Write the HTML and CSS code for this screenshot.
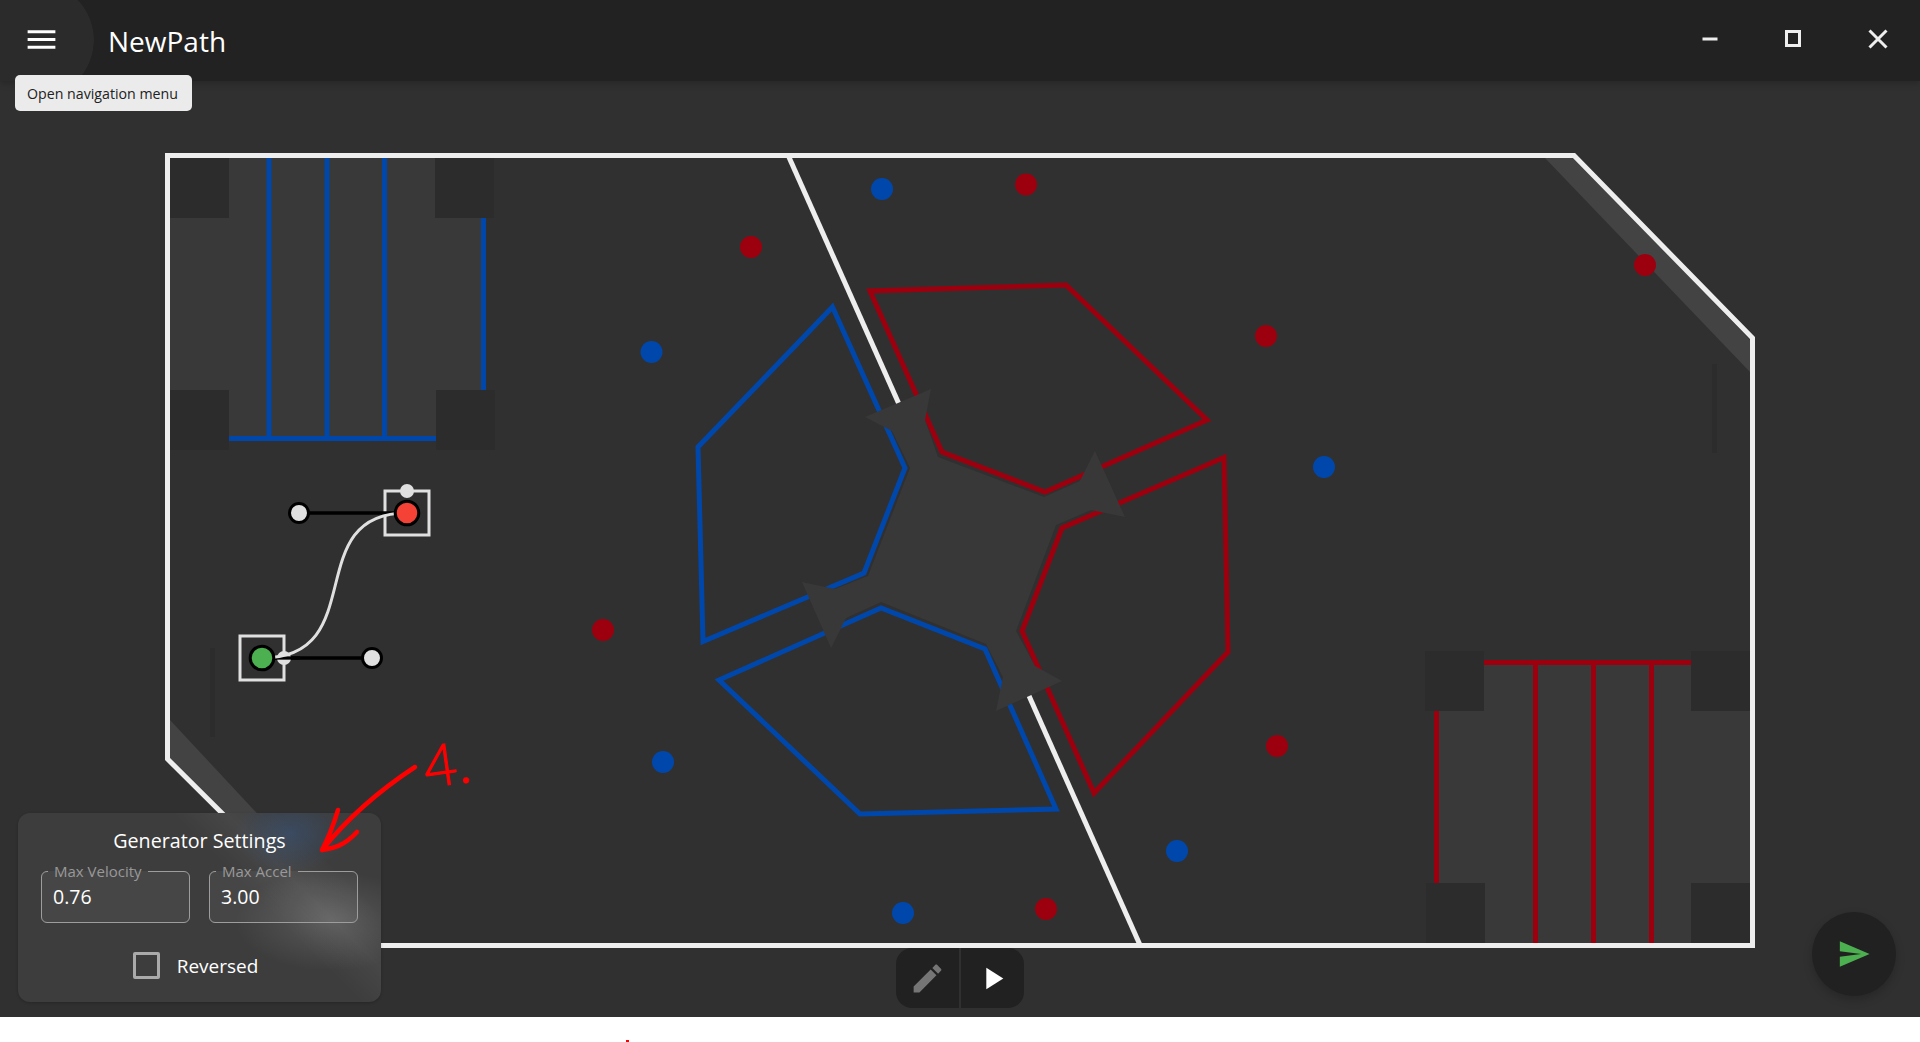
FILE: index.html
```html
<!DOCTYPE html>
<html lang="en" dir="ltr">
  <head>
    <meta charset="utf-8">
    <title>NewPath</title>
    <link rel="stylesheet" href="styles.css">
  </head>
  <body>
    <div class="app">
      <header class="appbar">
        <button class="menu-btn">
          <svg viewBox="0 0 24 24" width="37" height="37"><path d="M3 18h18v-2H3v2zm0-5h18v-2H3v2zm0-7v2h18V6H3z"/></svg>
        </button>
        <h1 class="title">NewPath</h1>
        <div class="window-btns">
          <button class="window-btn">
            <svg viewBox="0 0 20 20" width="20" height="20"><rect x="2.5" y="8.5" width="15" height="3"/></svg>
          </button>
          <button class="window-btn">
            <svg viewBox="0 0 20 20" width="20" height="20"><rect x="2.5" y="2.5" width="13" height="14" class="outline"/></svg>
          </button>
          <button class="window-btn">
            <svg viewBox="0 0 20 20" width="20" height="20"><path d="M1.5 1.5l17 17M18.5 1.5l-17 17" class="outline"/></svg>
          </button>
        </div>
      </header>

      <main class="editor">
        <div class="tooltip">Open navigation menu</div>

        <svg class="field" viewBox="0 81 1920 936">
          <!-- staging zones -->
          <rect class="zone" x="170" y="158" width="311" height="279"/>
          <rect class="zone" x="1439" y="665" width="311" height="278"/>
          <polygon class="band" points="1545,158 1575,158 1750,340 1750,372"/>
          <polygon class="band" points="170,720 170,760 355,943 378,943"/>

          <g class="blue-line">
            <path d="M269 158V437M327 158V437M384.500 158V437"/>
            <path d="M483.500 218V390M229 438.500H436"/>
            <polygon points="832.500,307 905,468 864,573 703,641.500 698,447"/>
            <polygon points="719,680 881,608 985,649 1056,809 860,814"/>
          </g>
          <g class="red-line">
            <path d="M1535.500 665V943M1593.500 665V943M1651.500 665V943"/>
            <path d="M1436.500 711V883M1484 662.500H1691"/>
            <polygon points="870,291 942,452 1045,492 1207,420 1066,285"/>
            <polygon points="1224,457.500 1062,528 1022,631 1094,793 1228,652"/>
          </g>

          <g class="corner">
            <rect x="170" y="158" width="59" height="60"/>
            <rect x="435" y="158" width="59" height="60"/>
            <rect x="170" y="390" width="59" height="60"/>
            <rect x="436" y="390" width="59" height="60"/>
            <rect x="1425" y="651" width="59" height="60"/>
            <rect x="1691" y="651" width="59" height="60"/>
            <rect x="1426" y="883" width="59" height="60"/>
            <rect x="1691" y="883" width="59" height="60"/>
            <rect x="1712" y="364" width="5" height="89"/>
            <rect x="210" y="648" width="5" height="89"/>
          </g>

          <path class="wall" d="M788 155L1140 945"/>

          <polygon class="hub" points="931,389 925,420 938,457 1044,497 1080,481 1095,451 1125,517 1091,510 1056,525 1016,631 1035,666 1062,681 996,711 1003,677 986,644 881,602 846,618 831,648 802,582 835,589 868,576 910,468 892,431 865,417"/>

          <path class="wall" d="M167.500 155.500H1574L1752.500 338V945.500H355L167.500 759Z"/>

          <g class="blue-dot">
            <circle cx="882" cy="189" r="11"/>
            <circle cx="651.500" cy="352" r="11"/>
            <circle cx="1324" cy="467" r="11"/>
            <circle cx="663" cy="762" r="11"/>
            <circle cx="1177" cy="851" r="11"/>
            <circle cx="903" cy="913" r="11"/>
          </g>
          <g class="red-dot">
            <circle cx="1026" cy="184.500" r="11"/>
            <circle cx="751" cy="247" r="11"/>
            <circle cx="1266" cy="336" r="11"/>
            <circle cx="1645" cy="265" r="11"/>
            <circle cx="603" cy="630" r="11"/>
            <circle cx="1277" cy="746" r="11"/>
            <circle cx="1046" cy="909" r="11"/>
          </g>

          <!-- the path being edited -->
          <rect class="robot" x="385" y="491" width="44" height="44"/>
          <rect class="robot" x="240" y="636" width="44" height="44"/>
          <path class="ctrl-line" d="M299 513H407M262 658H372"/>
          <circle class="handle" cx="284" cy="658" r="7"/>
          <path class="ctrl-line" d="M270 658H300"/>
          <path class="route" d="M262 658C372 658 299 513 407 513"/>
          <circle class="ctrl" cx="299" cy="513" r="9.500"/>
          <circle class="ctrl" cx="372" cy="658" r="9.500"/>
          <circle class="handle" cx="407" cy="491" r="7"/>
          <circle class="end-point" cx="407" cy="513" r="11.800"/>
          <circle class="start-point" cx="262" cy="658" r="11.800"/>
        </svg>

        <section class="settings">
          <h2 class="settings-title">Generator Settings</h2>
          <div class="settings-fields">
            <fieldset class="num-field">
              <legend>Max Velocity</legend>
              <span class="num-value">0.76</span>
            </fieldset>
            <fieldset class="num-field">
              <legend>Max Accel</legend>
              <span class="num-value">3.00</span>
            </fieldset>
          </div>
          <label class="check-row"><span class="check-box"></span>Reversed</label>
        </section>

        <div class="mode-toggle">
          <button class="mode-btn">
            <svg viewBox="0 0 24 24" width="37" height="37" class="muted"><path d="M3 17.250V21h3.750L17.810 9.940l-3.750-3.750L3 17.250zM20.710 7.040c.39-.39.39-1.020 0-1.410l-2.340-2.340c-.39-.39-1.020-.39-1.410 0l-1.830 1.830 3.750 3.750 1.830-1.830z"/></svg>
          </button>
          <button class="mode-btn">
            <svg viewBox="0 0 24 24" width="37" height="37"><path d="M8 5v14l11-7z"/></svg>
          </button>
        </div>

        <button class="fab">
          <svg viewBox="0 0 24 24" width="34" height="34"><path d="M2.010 21L23 12 2.010 3 2 10l15 2-15 2z"/></svg>
        </button>
      </main>
    </div>

    <!-- handwriting on top of the screenshot -->
    <svg class="scribble" viewBox="0 0 1920 1042">
      <path d="M415 767C380 790 350 815 322 850M338 810C335 820 330 835 322 850C335 848 345 845 357 832"/>
      <text x="424" y="786" class="scribble-text" transform="rotate(-8 440 770)">4.</text>
      <rect x="626" y="1040" width="3" height="2"/>
    </svg>
  </body>
</html>
```

FILE: styles.css
```css
html, body {
  margin: 0;
  background: #fff;
}

body {
  position: relative;
  height: 1042px;
  overflow: hidden;
  font-family: "Open Sans", "Noto Sans", sans-serif;
}

button {
  border: none;
  padding: 0;
  background: none;
  font: inherit;
  display: flex;
  align-items: center;
  justify-content: center;
}

.app {
  display: flex;
  flex-direction: column;
  height: 1017px;
  background: #303030;
  color: #fff;
}

.appbar {
  position: relative;
  z-index: 1;
  flex: none;
  height: 81px;
  display: flex;
  align-items: center;
  background: #222;
  box-shadow: 0 2px 7px rgba(0, 0, 0, 0.22);
}

/* hover circle behind the menu button, cut off by the bar */
.appbar::before {
  content: "";
  position: absolute;
  left: 0;
  top: 0;
  width: 94px;
  height: 81px;
  background: radial-gradient(circle 58px at 36px 40px, #2b2b2b 99%, transparent 100%);
}

.menu-btn {
  position: relative;
  margin-left: 23px;
  width: 37px;
  height: 37px;
  margin-top: -2px;
  fill: #fff;
}

.title {
  position: relative;
  margin: 0 0 0 48px;
  font-size: 28px;
  font-weight: 400;
}

.window-btns {
  margin-left: auto;
  display: flex;
}

.window-btn {
  width: 84px;
  height: 81px;
  margin-top: -3px;
  fill: #eee;
}

.outline {
  fill: none;
  stroke: #eee;
  stroke-width: 3;
}

.editor {
  position: relative;
  flex: 1;
}

.tooltip {
  position: absolute;
  z-index: 2;
  left: 15px;
  top: -6px;
  width: 177px;
  box-sizing: border-box;
  padding: 1px 0 0 12px;
  height: 36px;
  line-height: 36px;
  border-radius: 5px;
  background: #ebebeb;
  color: #222;
  font-size: 14.200px;
  white-space: nowrap;
}

.field {
  display: block;
  width: 1920px;
  height: 936px;
}

.zone { fill: #393939; }
.band { fill: #434343; }
.corner { fill: #2c2c2c; }
.hub { fill: #383838; }

.blue-line, .red-line {
  fill: none;
  stroke-width: 5;
}
.blue-line { stroke: #0047ab; }
.red-line { stroke: #9c000f; }

.blue-dot { fill: #0047ab; }
.red-dot { fill: #9c000f; }

.wall {
  fill: none;
  stroke: #eee;
  stroke-width: 5;
}

.robot {
  fill: none;
  stroke: #e0e0e0;
  stroke-width: 3;
}

.ctrl-line {
  fill: none;
  stroke: #000;
  stroke-width: 3.300;
}

.route {
  fill: none;
  stroke: #e0e0e0;
  stroke-width: 3;
}

.handle { fill: #e0e0e0; }

.ctrl, .end-point, .start-point {
  stroke: #000;
  stroke-width: 3;
}
.ctrl { fill: #e0e0e0; }
.end-point { fill: #f44336; }
.start-point { fill: #4caf50; }

/* frosted look: what shows through the glass is painted in */
.settings {
  position: absolute;
  z-index: 2;
  left: 18px;
  bottom: 15px;
  width: 363px;
  height: 189px;
  box-sizing: border-box;
  padding: 14px 23px 0;
  display: flex;
  flex-direction: column;
  align-items: center;
  border-radius: 12px;
  background:
    radial-gradient(ellipse 55px 40px at 272px 20px, rgba(55, 90, 140, 0.45), transparent),
    radial-gradient(ellipse 95px 50px at 312px 108px, rgba(255, 255, 255, 0.14), transparent),
    linear-gradient(45deg, transparent 62%, rgba(255, 255, 255, 0.05) 72%, transparent 82%),
    #3d3d3d;
  box-shadow: 0 1px 3px rgba(0, 0, 0, 0.2);
}

.settings-title {
  margin: 0;
  font-size: 19.700px;
  line-height: 28px;
  font-weight: 400;
}

.settings-fields {
  align-self: stretch;
  display: flex;
  gap: 19px;
  margin-top: 6px;
}

.num-field {
  flex: 1;
  min-width: 0;
  margin: 0;
  padding: 0 6px;
  height: 62px;
  box-sizing: border-box;
  border: 1.500px solid #9d9d9d;
  border-radius: 6px;
  background: rgba(255, 255, 255, 0.05);
}

.num-field legend {
  padding: 0 6px;
  font-size: 15px;
  line-height: 20px;
  color: #999;
}

.num-value {
  display: block;
  padding-left: 5px;
  font-size: 19.500px;
  line-height: 32px;
}

.check-row {
  display: flex;
  align-items: center;
  gap: 17px;
  margin-top: 29px;
  margin-right: 8px;
  font-size: 19px;
}

.check-box {
  width: 21px;
  height: 21px;
  border: 3px solid #aaa;
  border-radius: 2px;
}

.mode-toggle {
  position: absolute;
  left: 896px;
  bottom: 9px;
  display: flex;
  gap: 2px;
  height: 60px;
  border-radius: 16px;
  overflow: hidden;
}

.mode-btn {
  width: 63px;
  background: #212121;
  fill: #fff;
}

.mode-btn .muted { fill: #757575; }

.fab {
  position: absolute;
  right: 24px;
  bottom: 21px;
  width: 84px;
  height: 84px;
  border-radius: 50%;
  background: #212121;
  fill: #4caf50;
  box-shadow: 0 4px 10px rgba(0, 0, 0, 0.2);
}

.scribble {
  position: absolute;
  z-index: 3;
  left: 0;
  top: 0;
  width: 1920px;
  height: 1042px;
  fill: #f00;
  pointer-events: none;
}

.scribble path {
  fill: none;
  stroke: #f00;
  stroke-width: 4.500;
  stroke-linecap: round;
  stroke-linejoin: round;
}

.scribble-text {
  font-family: "Lato", sans-serif;
  font-weight: 300;
  font-size: 58px;
  stroke: #f00;
  stroke-width: 1;
}
```
